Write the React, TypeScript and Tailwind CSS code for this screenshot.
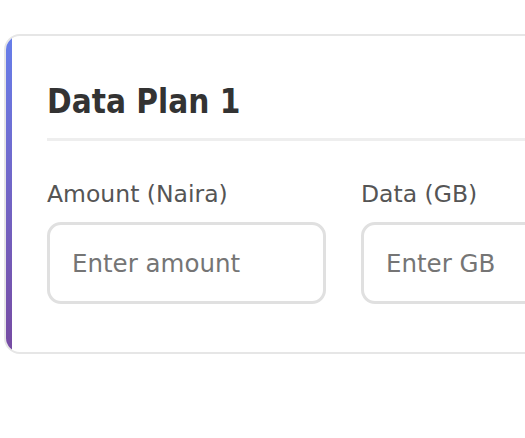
import React from "react";

const inputFont = { fontFamily: '"DejaVu Sans", Verdana, sans-serif' };

export default function App() {
  return (
    <div className="w-[525px] h-[438px] overflow-hidden bg-white" style={{ fontFamily: '"DejaVu Sans", Verdana, sans-serif' }}>
      <div className="ml-[4px] mt-[34px] w-[720px] flex rounded-[16px] border-2 border-[#e6e6e6] overflow-hidden bg-white">
        <div className="w-[6px] shrink-0 bg-gradient-to-b from-[#667eea] to-[#764ba2]" />
        <div className="flex-1 pl-[35px] pr-[40px] pt-[46px] pb-[48px]">
          <h3
            className="text-[33px] leading-[40px] font-bold text-[#333] pb-[16px] border-b-[3px] border-[#eeeeee]"
            style={{ fontFamily: '"DejaVu Sans Condensed", "DejaVu Sans", sans-serif', fontStretch: "condensed" }}
          >
            Data Plan 1
          </h3>
          <div className="grid grid-cols-[279px_279px] gap-[35px] mt-[38px]">
            <div className="flex flex-col">
              <label className="text-[23.5px] leading-[30px] text-[#555] mb-[13px]">Amount (Naira)</label>
              <input
                placeholder="Enter amount"
                className="h-[82px] rounded-[14px] border-[3px] border-[#e0e0e0] px-[22px] text-[24.5px] text-[#333] placeholder:text-[#757575] outline-none"
                style={inputFont}
              />
            </div>
            <div className="flex flex-col">
              <label className="text-[23.5px] leading-[30px] text-[#555] mb-[13px]">Data (GB)</label>
              <input
                placeholder="Enter GB"
                className="h-[82px] rounded-[14px] border-[3px] border-[#e0e0e0] px-[22px] text-[24.5px] text-[#333] placeholder:text-[#757575] outline-none"
                style={inputFont}
              />
            </div>
          </div>
        </div>
      </div>
    </div>
  );
}
